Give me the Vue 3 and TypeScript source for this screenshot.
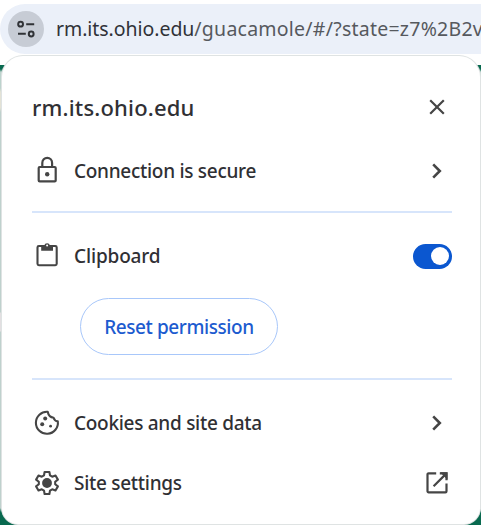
<script setup lang="ts">
import { ref } from 'vue'

const host = 'rm.its.ohio.edu'
const path = '/guacamole/#/?state=z7%2B2v'
const clipboardAllowed = ref<boolean>(true)
</script>

<template>
  <div class="browser">
    <header class="omnibox">
      <span class="site-chip">
        <svg width="20" height="20" viewBox="0 0 20 20" fill="none" stroke="#303236" stroke-width="2">
          <circle cx="4.6" cy="5.2" r="2.4" />
          <path d="M10.2 5.2h8M2 14.8h7.8" />
          <circle cx="15.2" cy="15" r="2.4" />
        </svg>
      </span>
      <span class="url"><span class="host">{{ host }}</span><span class="path">{{ path }}</span></span>
    </header>

    <main class="panel">
      <div class="row heading">
        <h1>{{ host }}</h1>
        <svg class="end" width="32" height="32" viewBox="0 0 32 32" fill="none" stroke="#454545" stroke-width="2.2">
          <path d="M9.2 9.2l13.6 13.6M22.8 9.2L9.2 22.8" />
        </svg>
      </div>

      <div class="row connection">
        <svg class="icon" width="32" height="32" viewBox="0 0 32 32" fill="none" stroke="#454545" stroke-width="2.2">
          <rect x="7.7" y="12" width="17" height="14.4" rx="1" />
          <path d="M11.3 12V7.9a4.9 5.1 0 0 1 9.8 0V12" />
          <circle cx="16.2" cy="19.2" r="2.2" fill="#454545" stroke="none" />
        </svg>
        <span class="label">Connection is secure</span>
        <svg class="end" width="32" height="32" viewBox="0 0 32 32" fill="none" stroke="#454545" stroke-width="2.6">
          <path d="M12.2 9.4l6.6 6.6-6.6 6.6" />
        </svg>
      </div>

      <hr />

      <div class="row clipboard">
        <svg class="icon" width="32" height="32" viewBox="0 0 32 32" fill="none" stroke="#454545" stroke-width="2.1">
          <rect x="6.5" y="6" width="19.2" height="19.2" rx="1.4" />
          <path d="M10.2 5.5h3a3 3 0 0 1 5.8 0h3v5.3H10.2z" fill="#454545" stroke="none" />
          <circle cx="16.1" cy="5.6" r="1" fill="#fff" stroke="none" />
        </svg>
        <span class="label clip">Clipboard</span>
        <button
          class="toggle"
          :class="{ on: clipboardAllowed }"
          role="switch"
          :aria-checked="clipboardAllowed"
          @click="clipboardAllowed = !clipboardAllowed"
        ><span class="knob"></span></button>
      </div>

      <button class="reset"><span>Reset permission</span></button>

      <hr />

      <div class="row cookies">
        <svg class="icon" width="32" height="32" viewBox="0 0 32 32" fill="none" stroke="#454545" stroke-width="2.1" stroke-linejoin="round">
          <path d="M16.7 4.8A11 11 0 1 0 26.8 14.3Q23.5 14 22.6 10.7Q17.8 10.3 16.7 4.8Z" />
          <g fill="#454545" stroke="none">
            <circle cx="14.2" cy="11.4" r="2" />
            <circle cx="11.2" cy="17.2" r="2" />
            <circle cx="19.6" cy="19.2" r="1.4" />
          </g>
        </svg>
        <span class="label">Cookies and site data</span>
        <svg class="end" width="32" height="32" viewBox="0 0 32 32" fill="none" stroke="#454545" stroke-width="2.6">
          <path d="M12.2 9.4l6.6 6.6-6.6 6.6" />
        </svg>
      </div>

      <div class="row settings">
        <svg class="icon" width="32" height="32" viewBox="0 0 32 32" fill="none" stroke="#454545" stroke-width="2.1" stroke-linejoin="round">
          <path d="M13.6 5h4.8l.6 3.4 2.2 1.3 3.3-1.2 2.4 4.1-2.7 2.2v2.4l2.7 2.2-2.4 4.1-3.3-1.2-2.2 1.3-.6 3.4h-4.8l-.6-3.4-2.2-1.3-3.3 1.2-2.4-4.1 2.7-2.2v-2.4l-2.7-2.2 2.4-4.1 3.3 1.2 2.2-1.3z" />
          <circle cx="16" cy="16" r="4.9" fill="#454545" stroke="none" />
        </svg>
        <span class="label">Site settings</span>
        <svg class="end" width="32" height="32" viewBox="0 0 32 32" fill="none" stroke="#454545" stroke-width="2.2">
          <path d="M15.2 6.3H7.6a1.1 1.1 0 0 0-1.1 1.1v16.8a1.1 1.1 0 0 0 1.1 1.1h16.8a1.1 1.1 0 0 0 1.1-1.1V16.6M18.8 6.3h6.7v6.9M25.2 6.6L12.6 19.2" />
          <path d="M19 5.3h7.5v7.5z" fill="#454545" stroke="none" />
        </svg>
      </div>
    </main>
  </div>
</template>

<style>
body {
  overflow: hidden;
}
</style>

<style scoped>
.browser {
  box-sizing: border-box;
  width: 481px;
  height: 525px;
  padding-top: 4px;
  overflow: hidden;
  background: linear-gradient(#fff 65px, #08694f 65px, #08694f 69px, #bdd3cd 72px, #bdd3cd 88px, #e3e2d6 92px, #e3e2d6 108px, #bfd1cd 112px, #bfd1cd 312px, #e2dfe1 313px, #e2dfe1 331px, #bfd1cd 332px, #bfd1cd 508px, #08694f 512px);
  font-family: "Noto Sans", "Open Sans", sans-serif;
  color: #303034;
}
.omnibox {
  display: flex;
  align-items: center;
  box-sizing: border-box;
  width: 520px;
  height: 50px;
  padding: 0 0 0 8px;
  border-radius: 25px;
  background: #ebf0f9;
}
.site-chip {
  display: flex;
  align-items: center;
  justify-content: center;
  flex: none;
  width: 36px;
  height: 36px;
  border-radius: 50%;
  background: #c7ccd5;
}
.url {
  margin-left: 12px;
  font-size: 19.5px;
  line-height: 28px;
  white-space: nowrap;
}
.host {
  color: #303238;
  letter-spacing: -0.05px;
}
.path {
  color: #56595e;
  letter-spacing: 0.24px;
}
.panel {
  display: flex;
  flex-direction: column;
  box-sizing: border-box;
  width: 478px;
  height: 468px;
  margin: 2px 0 0 2px;
  padding: 35px 28px 0 30px;
  border-radius: 21px 21px 16px 16px;
  background: #fff;
  box-shadow: 0 0 0 1px #dfe3e3;
}
.row {
  display: flex;
  align-items: center;
  flex: none;
  height: 32px;
}
h1 {
  margin: 0;
  font-size: 22px;
  font-weight: 500;
  line-height: 30px;
  letter-spacing: 0.18px;
}
.connection {
  margin-top: 32px;
}
.icon {
  flex: none;
  margin-left: -1.5px;
}
.label {
  margin-left: 11.5px;
  font-size: 19px;
  font-weight: 500;
  line-height: 28px;
  letter-spacing: -0.29px;
  white-space: nowrap;
}
.clip {
  letter-spacing: -0.15px;
}
.end {
  flex: none;
  margin-left: auto;
  margin-right: -0.5px;
}
hr {
  flex: none;
  width: 100%;
  height: 2px;
  margin: 24px 0 0;
  border: 0;
  background: #d7e5fb;
}
.clipboard {
  margin-top: 27px;
}
.toggle {
  display: flex;
  align-items: center;
  box-sizing: border-box;
  width: 39px;
  height: 25px;
  margin-left: auto;
  padding: 0 3px;
  border: 0;
  border-radius: 13px;
  background: #8b9097;
}
.toggle.on {
  justify-content: flex-end;
  background: #0b57d0;
}
.knob {
  width: 18px;
  height: 18px;
  border-radius: 50%;
  background: #fff;
}
.reset {
  flex: none;
  box-sizing: border-box;
  width: 198px;
  height: 57px;
  margin: 26px 0 0 48px;
  padding: 0;
  border: 1px solid #a8c7fa;
  border-radius: 29px;
  background: #fff;
  color: #1c5bcf;
  font: 500 19px/28px "Noto Sans", "Open Sans", sans-serif;
  letter-spacing: -0.42px;
  white-space: nowrap;
}
.reset + hr {
  margin-top: 23px;
}
.cookies {
  margin-top: 27px;
}
.settings {
  margin-top: 28px;
}
</style>
